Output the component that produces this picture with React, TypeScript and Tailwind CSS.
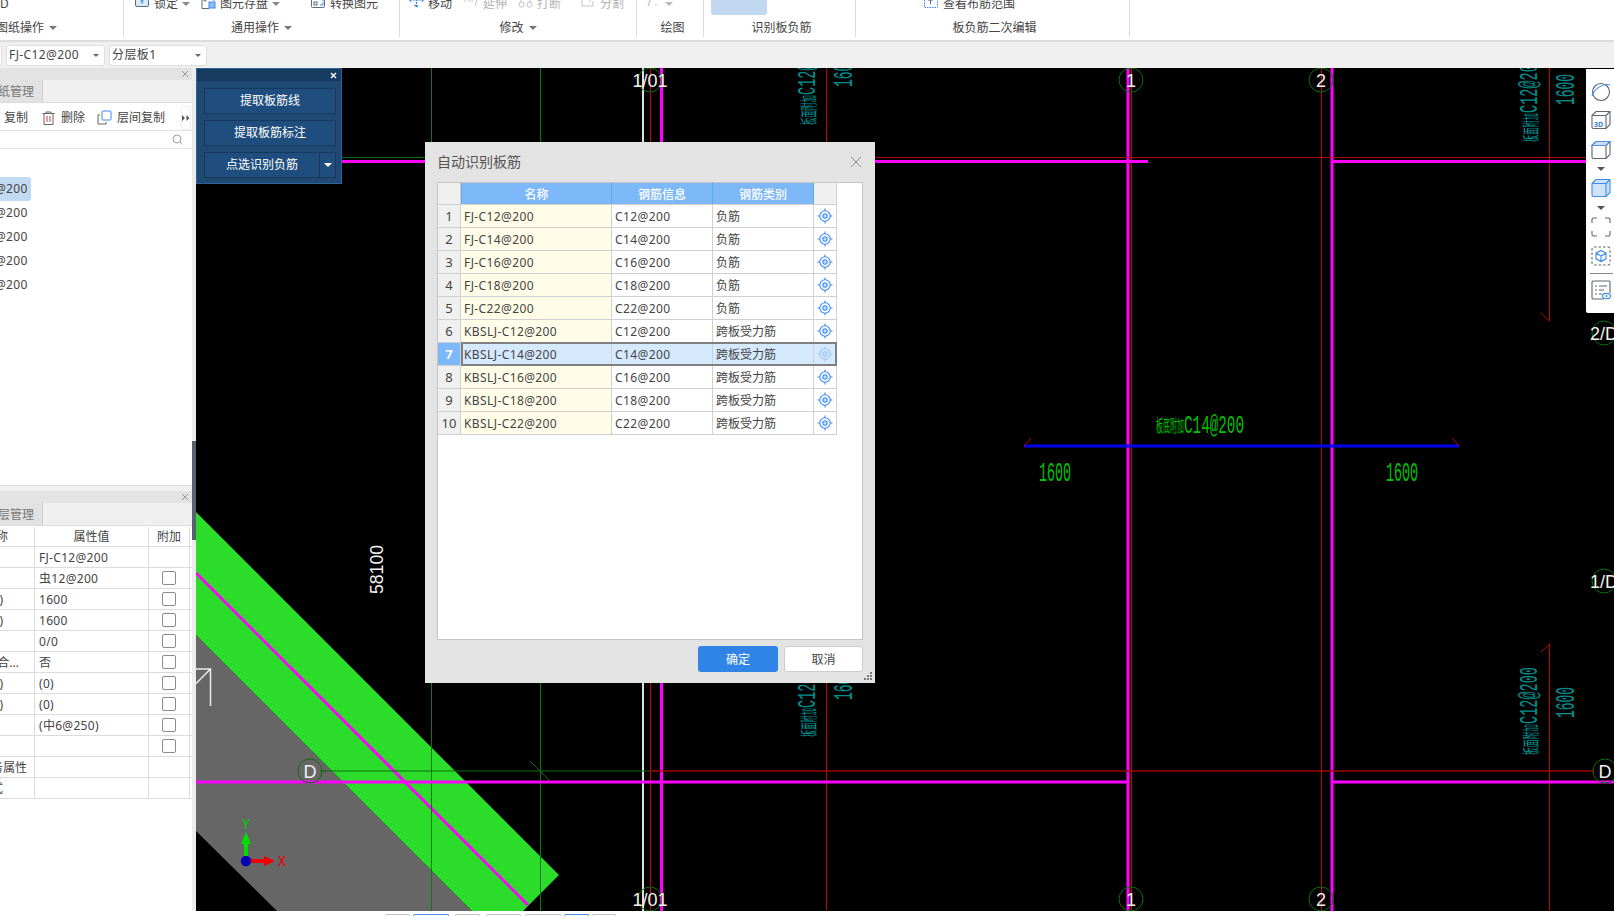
import React from "react";

const rows = [
  ["FJ-C12@200", "C12@200", "负筋"],
  ["FJ-C14@200", "C14@200", "负筋"],
  ["FJ-C16@200", "C16@200", "负筋"],
  ["FJ-C18@200", "C18@200", "负筋"],
  ["FJ-C22@200", "C22@200", "负筋"],
  ["KBSLJ-C12@200", "C12@200", "跨板受力筋"],
  ["KBSLJ-C14@200", "C14@200", "跨板受力筋"],
  ["KBSLJ-C16@200", "C16@200", "跨板受力筋"],
  ["KBSLJ-C18@200", "C18@200", "跨板受力筋"],
  ["KBSLJ-C22@200", "C22@200", "跨板受力筋"],
];

const props = [
  { left: "", pad: "", value: "FJ-C12@200", check: false },
  { left: "", pad: "", value: "虫12@200", check: true },
  { left: ")", pad: "pr-[31px]", value: "1600", check: true },
  { left: ")", pad: "pr-[31px]", value: "1600", check: true },
  { left: "", pad: "", value: "0/0", check: true },
  { left: "合...", pad: "pr-[15px]", value: "否", check: true },
  { left: ")", pad: "pr-[31px]", value: "(0)", check: true },
  { left: ")", pad: "pr-[31px]", value: "(0)", check: true },
  { left: "", pad: "", value: "(中6@250)", check: true },
  { left: "", pad: "", value: "", check: true },
  { left: "务属性", pad: "pr-[7px]", value: "", check: false },
  { left: "式", pad: "pr-[31px]", value: "", check: false },
];

const Caret = ({ className = "border-t-[#777]" }: { className?: string }) => (
  <span className={`inline-block h-0 w-0 border-x-[4px] border-t-[4px] border-x-transparent ${className}`} />
);

const Group = ({ width, label, caret, pad = "", top, children }: any) => (
  <div className={`flex h-[37px] shrink-0 flex-col border-r border-[#dcdcdc] ${width}`}>
    <div className={`flex h-[8px] items-center ${top}`}>{children}</div>
    <div className={`mt-[11px] flex h-[18px] items-center gap-[5px] ${pad}`}>
      <span>{label}</span>
      {caret && <Caret />}
    </div>
  </div>
);

const Item = ({ icon, text, caret, gray, className = "" }: any) => (
  <div className={`flex items-center gap-[4px] ${gray ? "text-[#b5b5b5]" : ""} ${className}`}>
    {icon}
    {text && <span>{text}</span>}
    {caret && <Caret className={gray ? "border-t-[#bbb]" : "border-t-[#888]"} />}
  </div>
);

const RIcon = ({ children }: { children: React.ReactNode }) => (
  <svg className="shrink-0" width="15" height="14" viewBox="0 0 15 14" fill="none" strokeWidth="1">
    {children}
  </svg>
);

const Target = ({ light }: { light?: boolean }) => (
  <svg width="16" height="16" viewBox="0 0 16 16" fill="none" stroke={light ? "#9fc5ee" : "#3d8bee"} strokeWidth="1.1">
    <circle cx="8" cy="8" r="5.2" />
    <circle cx="8" cy="8" r="2.2" fill={light ? "#9fc5ee" : "#3d8bee"} fillOpacity="0.3" />
    <path d="M8 0.5v2.4M8 13.1v2.4M0.5 8h2.4M13.1 8h2.4" />
  </svg>
);

const Cube = ({ top, fill, stroke = "#5d6675" }: { top?: string; fill?: string; stroke?: string }) => (
  <svg width="20" height="20" viewBox="0 0 20 20" fill="none" stroke={stroke} strokeWidth="1.1">
    <path d="M1 5.5 5 1.5h14v13l-4 4H2.5a1.5 1.5 0 0 1-1.5-1.5z" fill={fill || "none"} />
    <path d="M1 5.5h14v13M15 5.5l4-4" />
    {top && <path d="M1 5.5 5 1.5h14l-4 4z" fill={top} stroke="#4a90e8" />}
  </svg>
);

const cadFont = "'Liberation Mono', monospace";
const cjkFont = "'Noto Sans CJK SC', sans-serif";

const VText = ({ x, y, len, size, cjk, children, fill = "#009090" }: any) => (
  <text
    transform={`translate(${x} ${y}) rotate(-90)`}
    fontSize={size}
    fill={fill}
    textLength={len}
    lengthAdjust="spacingAndGlyphs"
    fontFamily={cjk ? cjkFont : cadFont}
  >
    {children}
  </text>
);

const HText = ({ x, y, len, size, cjk, children, fill = "#00c000" }: any) => (
  <text
    x={x}
    y={y}
    fontSize={size}
    fill={fill}
    textLength={len}
    lengthAdjust="spacingAndGlyphs"
    fontFamily={cjk ? cjkFont : cadFont}
  >
    {children}
  </text>
);

const Bubble = ({ x, y, text, r = 12 }: { x: number; y: number; text: string; r?: number }) => (
  <g>
    <circle cx={x} cy={y} r={r} fill="none" stroke="#0a6f0a" strokeWidth="1" />
    <text x={x} y={y + 6.5} fontSize="18" fill="#f0f0f0" textAnchor="middle" fontFamily="'Liberation Sans', sans-serif">
      {text}
    </text>
  </g>
);

const CadCanvas = () => (
  <svg className="block h-full w-full" viewBox="196 68 1418 843">
    <polygon points="196,635 472,911 277,911 196,831" fill="#666666" />
    <polygon points="196,512 559,875 523,911 472,911 196,635" fill="#2bdc2b" />
    <line x1="196" y1="573" x2="528" y2="905" stroke="#ff00ff" strokeWidth="3" />

    <path d="M431.5 68V911M540.5 68V911" stroke="#0a7a0a" strokeWidth="1" />
    <path d="M643 68V911" stroke="#e0e0e0" strokeWidth="2" />
    <path d="M650.5 68V911M826.5 68V911M1131.5 68V911M1321.5 68V911" stroke="#c80000" strokeWidth="1" />
    <path d="M1549.5 68V321L1541 313M1549.5 911V644L1541 652" stroke="#c80000" strokeWidth="1" fill="none" />
    <path d="M661.5 68V911M1128 68V911M1332 68V911" stroke="#ff00ff" strokeWidth="3" />

    <path d="M196 157.5H431" stroke="#0a6f0a" strokeWidth="1" />
    <path d="M431 157.5H1614" stroke="#b00000" strokeWidth="1" />
    <path d="M196 161.5H1148M1332 161.5H1614" stroke="#ff00ff" strokeWidth="3" />
    <path d="M320 771H650" stroke="#0a6f0a" strokeWidth="1" />
    <path d="M530 761 549 780" stroke="#0a6f0a" strokeWidth="1" />
    <path d="M650 771H1594" stroke="#a00000" strokeWidth="1.5" />
    <path d="M196 782H1128M1332 782H1614" stroke="#ff00ff" strokeWidth="3" />

    <path d="M1024 446H1459" stroke="#0000f0" strokeWidth="3" />
    <path d="M1024 446 1031 438M1459 446 1452 438" stroke="#c80000" strokeWidth="1" />
    <HText x={1039} y={481} len={32} size={27}>1600</HText>
    <HText x={1386} y={481} len={32} size={27}>1600</HText>
    <HText x={1184} y={433} len={60} size={26}>C14@200</HText>
    <HText x={1156} y={432} len={28} size={17} cjk>板底附加</HText>

    <VText x={1537} y={724} len={57} size={26}>C12@200</VText>
    <VText x={1537} y={755} len={31} size={17} cjk>板面附加</VText>
    <VText x={1574} y={718} len={31} size={27}>1600</VText>
    <VText x={1537} y={113} len={57} size={26}>C12@200</VText>
    <VText x={1537} y={142} len={29} size={17} cjk>板面附加</VText>
    <VText x={1574} y={105} len={31} size={27}>1600</VText>
    <VText x={815} y={95} len={57} size={26}>C12@200</VText>
    <VText x={815} y={125} len={30} size={17} cjk>板面附加</VText>
    <VText x={852} y={87} len={31} size={27}>1600</VText>
    <VText x={815} y={708} len={57} size={26}>C12@200</VText>
    <VText x={815} y={737} len={29} size={17} cjk>板面附加</VText>
    <VText x={852} y={700} len={31} size={27}>1600</VText>
    <text
      transform="translate(383 594) rotate(-90)"
      fontSize="19"
      fill="#f4f4f4"
      textLength={49}
      lengthAdjust="spacingAndGlyphs"
      fontFamily="'Liberation Sans', sans-serif"
    >
      58100
    </text>

    <path d="M196 669H210.5V706M210.5 669 196 683.5" stroke="#ececec" strokeWidth="1.5" fill="none" />

    <Bubble x={650} y={80} text="1/01" />
    <Bubble x={1131} y={80} text="1" />
    <Bubble x={1321} y={80} text="2" />
    <Bubble x={650} y={899} text="1/01" />
    <Bubble x={1131} y={899} text="1" />
    <Bubble x={1321} y={899} text="2" />
    <Bubble x={1604} y={333} text="2/D" />
    <Bubble x={1604} y={581} text="1/D" />
    <Bubble x={1605} y={771} text="D" />
    <Bubble x={310} y={771} text="D" />

    <rect x="244" y="842" width="4" height="18" fill="#00e000" />
    <polygon points="246,832 241,844 251,844" fill="#00e000" />
    <rect x="248" y="859" width="17" height="4" fill="#f00000" />
    <polygon points="275,861 264,856 264,866" fill="#f00000" />
    <circle cx="246" cy="861" r="5.2" fill="#0000b8" />
    <text x="246" y="829" fontSize="14" fill="#00d000" textAnchor="middle" fontFamily="'Liberation Mono', monospace">Y</text>
    <text x="282" y="866" fontSize="14" fill="#f00000" textAnchor="middle" fontFamily="'Liberation Mono', monospace">X</text>
  </svg>
);

const Ribbon = () => (
  <div className="flex h-[42px] shrink-0 border-b-2 border-[#dcdcdc] bg-white text-[12px] text-[#444]">
    <Group width="w-[124px]" label="图纸操作" caret pad="-ml-[4px]" top="">
      <span>D</span>
    </Group>
    <Group width="w-[276px]" label="通用操作" caret pad="justify-center" top="pl-[11px]">
      <Item
        icon={
          <RIcon>
            <rect x="0.5" y="-2.5" width="13" height="12" rx="1.5" stroke="#5a6a80" fill="#dbe9f9" />
            <path d="M7 7V3M5.5 4.5 7 3l1.5 1.5" stroke="#2f84e5" />
          </RIcon>
        }
        text="锁定"
        caret
      />
      <Item
        className="ml-[11px]"
        icon={
          <RIcon>
            <path d="M8 11.5H1V-2h12v6" stroke="#5a6a80" />
            <circle cx="4" cy="3" r="1.2" stroke="#5a6a80" />
            <rect x="8" y="5" width="6" height="6" fill="#8fbdf0" stroke="#3d8bee" />
          </RIcon>
        }
        text="图元存盘"
        caret
      />
      <Item
        className="ml-[31px]"
        icon={
          <RIcon>
            <rect x="0.5" y="-2.5" width="13" height="13" rx="1" stroke="#5a6a80" />
            <rect x="3" y="5" width="3" height="3" stroke="#5a6a80" />
            <path d="M9 1h3v3M9 8h3V5" stroke="#3d8bee" />
          </RIcon>
        }
        text="转换图元"
      />
    </Group>
    <Group width="w-[237px]" label="修改" caret pad="justify-center" top="pl-[9px]">
      <Item
        icon={
          <RIcon>
            <path d="M7.5 -1v11M0.5 3h14M5.5 8l2 2 2-2M2.5 1l-2 2 2 2M12.5 1l2 2-2 2" stroke="#2f84e5" strokeWidth="1.2" strokeDasharray="2 1" />
          </RIcon>
        }
        text="移动"
      />
      <Item
        gray
        className="ml-[12px]"
        icon={
          <RIcon>
            <path d="M0 4h2M4 4h2M7 4h2M14 0 11 9" stroke="#c4c4c4" />
          </RIcon>
        }
        text="延伸"
      />
      <Item
        gray
        className="ml-[11px]"
        icon={
          <RIcon>
            <rect x="1" y="5" width="5" height="5" rx="2" stroke="#c4c4c4" />
            <rect x="9" y="5" width="5" height="5" rx="2" stroke="#c4c4c4" />
            <path d="M3 5V1M12 5V1" stroke="#c4c4c4" />
          </RIcon>
        }
        text="打断"
      />
      <Item
        gray
        className="ml-[20px]"
        icon={
          <RIcon>
            <path d="M8 0H1v9h11V4M14 -1 8 5" stroke="#c4c4c4" />
          </RIcon>
        }
        text="分割"
      />
    </Group>
    <Group width="w-[67px]" label="绘图" pad="justify-center pl-[5px]" top="pl-[9px]">
      <Item
        gray
        icon={
          <RIcon>
            <path d="M5 1 2 9M9 8h2" stroke="#c0c0c0" strokeWidth="1.2" />
          </RIcon>
        }
        text=""
        caret
      />
    </Group>
    <Group width="w-[152px]" label="识别板负筋" pad="justify-center pl-[4px]" top="pl-[7px]">
      <div className="h-[22px] w-[56px] shrink-0 rounded-[3px] bg-[#c2d8f0]" />
    </Group>
    <Group width="w-[274px]" label="板负筋二次编辑" pad="justify-center pl-[4px]" top="pl-[68px]">
      <Item
        icon={
          <RIcon>
            <rect x="0.5" y="-2.5" width="13" height="13" stroke="#3d8bee" strokeDasharray="1.5 1" />
            <path d="M4 3h5M6.5 1v6" stroke="#5a6a80" />
          </RIcon>
        }
        text="查看布筋范围"
      />
    </Group>
  </div>
);

const Combo = ({ text, width }: { text: string; width: string }) => (
  <div className={`flex h-[21px] items-center justify-between rounded-[3px] border border-[#dedede] bg-white pl-[2px] pr-[5px] ${width}`}>
    <span className="tracking-[0.4px]">{text}</span>
    <span className="h-0 w-0 border-x-[3px] border-t-[3px] border-x-transparent border-t-[#666]" />
  </div>
);

const Toolbar = () => (
  <div className="flex h-[26px] shrink-0 items-center gap-[4px] bg-[#f0f0f0] text-[12px] text-[#444]">
    <div className="-ml-[6px] h-[21px] w-[8px] rounded-[3px] border border-[#dedede] bg-white" />
    <Combo text="FJ-C12@200" width="w-[99px]" />
    <Combo text="分层板1" width="w-[98px]" />
  </div>
);

const PanelHead = () => (
  <div className="flex h-[12px] shrink-0 items-center justify-end bg-[#e3e3e3] pr-[3px] text-[#999]">
    <svg width="8" height="8" viewBox="0 0 8 8" stroke="currentColor" strokeWidth="1">
      <path d="M1 1l6 6M7 1 1 7" />
    </svg>
  </div>
);

const PanelTab = ({ text }: { text: string }) => (
  <div className="flex h-[23px] shrink-0 items-end border-b border-[#dcdcdc] bg-[#f0f0f0]">
    <div className="flex h-[22px] w-[43px] items-center justify-end overflow-hidden whitespace-nowrap border-r border-[#cfcfcf] bg-[#e2e2e2] pr-[8px] pt-[1px] text-[#777]">
      {text}
    </div>
  </div>
);

const LeftColumn = () => (
  <div className="flex w-[196px] shrink-0 text-[12px] text-[#444]">
    <div className="flex w-[192px] shrink-0 flex-col bg-[#f0f0f0]">
      <div className="flex h-[418px] shrink-0 flex-col border-b border-[#dcdcdc] bg-white">
        <PanelHead />
        <PanelTab text="纸管理" />
        <div className="flex h-[28px] shrink-0 items-center border-b border-[#e2e2e2] pl-[4px] pt-[2px]">
          <span>复制</span>
          <svg className="ml-[14px]" width="13" height="14" viewBox="0 0 13 14" fill="none" stroke="#666" strokeWidth="1">
            <path d="M0.5 2.5h12M4 2.5V1h5v1.5M2 2.5v11h9v-11" />
            <path d="M5 5v6M8 5v6" stroke="#e03a3a" />
          </svg>
          <span className="ml-[6px]">删除</span>
          <svg className="ml-[12px]" width="15" height="15" viewBox="0 0 15 15" fill="none" stroke="#666" strokeWidth="1">
            <path d="M3 5H1v9h8v-2" />
            <rect x="5" y="1" width="9" height="9" rx="1" stroke="#3d8bee" fill="#fff" />
          </svg>
          <span className="ml-[5px]">层间复制</span>
          <div className="ml-[16px] flex h-[24px] w-[10px] items-center justify-center rounded-[2px] border border-[#eee]">
            <svg width="8" height="6" viewBox="0 0 8 6" fill="#555">
              <path d="M0 0l3 3-3 3zM4.5 0l3 3-3 3z" />
            </svg>
          </div>
        </div>
        <div className="flex h-[18px] shrink-0 items-center justify-end border-b border-[#e2e2e2] pr-[9px] text-[#a0a0a0]">
          <svg width="11" height="11" viewBox="0 0 11 11" fill="none" stroke="currentColor" strokeWidth="1">
            <circle cx="5" cy="5" r="4" />
            <path d="M8 8l2.5 2.5" />
          </svg>
        </div>
        <div className="flex flex-col pt-[28px] text-[12px]">
          {[0, 1, 2, 3, 4].map((i) => (
            <div
              key={i}
              className={`-ml-[5px] flex h-[24px] w-[36px] items-center tracking-[0.3px] ${i === 0 ? "rounded-[3px] bg-[#c2d9f2]" : ""}`}
            >
              @200
            </div>
          ))}
        </div>
      </div>
      <div className="mt-[5px] flex flex-1 flex-col bg-white">
        <PanelHead />
        <PanelTab text="层管理" />
        <div className="grid h-[21px] shrink-0 grid-cols-[35px_114px_41px] border-b border-[#dcdcdc] pt-[1px]">
          <div className="flex items-center justify-end overflow-hidden border-r border-[#dcdcdc] pr-[26px]">称</div>
          <div className="flex items-center justify-center border-r border-[#dcdcdc]">属性值</div>
          <div className="flex items-center justify-center border-r border-[#dcdcdc]">附加</div>
        </div>
        {props.map((p, i) => (
          <div key={i} className="grid h-[21px] shrink-0 grid-cols-[35px_114px_41px] border-b border-[#dcdcdc]">
            <div className={`flex items-center justify-end overflow-hidden whitespace-nowrap border-r border-[#dcdcdc] pt-[1px] ${p.pad}`}>{p.left}</div>
            <div className="flex items-center border-r border-[#dcdcdc] pl-[4px] pt-[1px] tracking-[0.3px]">{p.value}</div>
            <div className="flex items-center justify-center border-r border-[#dcdcdc]">
              {p.check && <div className="h-[14px] w-[14px] rounded-[2px] border border-[#8c8c8c] bg-white" />}
            </div>
          </div>
        ))}
      </div>
    </div>
    <div className="flex w-[4px] shrink-0 flex-col bg-[#ececec] pt-[373px]">
      <div className="h-[99px] bg-[#566270]" />
    </div>
  </div>
);

const FloatBtn = ({ text, className = "" }: { text: string; className?: string }) => (
  <div className={`flex h-[26px] items-center justify-center border border-[#17395f] bg-[#1f4e7e] ${className}`}>{text}</div>
);

const FloatPanel = () => (
  <div className="absolute left-0 top-0 w-[146px] border-[1.5px] border-[#2a6299] bg-[#1f4872] text-[12px] text-white">
    <div className="flex h-[12px] items-center justify-end bg-[#173a60] pr-[4px]">
      <svg width="7" height="7" viewBox="0 0 7 7" stroke="#fff" strokeWidth="1.4">
        <path d="M1 1l5 5M6 1 1 6" />
      </svg>
    </div>
    <div className="flex flex-col gap-[6px] pb-[5px] pl-[7px] pr-[5px] pt-[7px]">
      <FloatBtn text="提取板筋线" />
      <FloatBtn text="提取板筋标注" />
      <div className="flex">
        <FloatBtn text="点选识别负筋" className="flex-1" />
        <div className="flex h-[26px] w-[16px] items-center justify-center border-y border-r border-[#17395f] bg-[#1f4e7e]">
          <Caret className="border-t-white" />
        </div>
      </div>
    </div>
  </div>
);

const Dialog = () => (
  <div className="absolute left-[229px] top-[74px] flex h-[541px] w-[450px] flex-col bg-[#e3e3e3] px-[12px] text-[12px] text-[#444]">
    <div className="flex h-[40px] shrink-0 items-center justify-between pb-[1px]">
      <span className="text-[14px] text-[#555]">自动识别板筋</span>
      <svg className="mr-[1px]" width="12" height="12" viewBox="0 0 12 12" stroke="#8a8a8a" strokeWidth="1">
        <path d="M1 1l10 10M11 1 1 11" />
      </svg>
    </div>
    <div className="h-[458px] shrink-0 border border-[#c4c4c4] bg-white">
      <div className="grid h-[22px] w-[399px] grid-cols-[23px_151px_101px_101px_23px] border-b border-[#d0d0d0] font-medium text-white">
        <div className="border-r border-[#d0d0d0] bg-[#f0f0f0]" />
        <div className="flex items-center justify-center border-x border-[#5ea8f0] bg-[#7db8f8] pt-[2px]">名称</div>
        <div className="flex items-center justify-center border-r border-[#5ea8f0] bg-[#7db8f8] pt-[2px]">钢筋信息</div>
        <div className="flex items-center justify-center border-r border-[#5ea8f0] bg-[#7db8f8] pt-[2px]">钢筋类别</div>
        <div className="border-r border-[#d0d0d0] bg-[#f0f0f0]" />
      </div>
      {rows.map((r, i) => {
        const sel = i === 6;
        return (
          <div key={i} className="relative grid h-[23px] w-[399px] grid-cols-[23px_151px_101px_101px_23px] border-b border-[#d0d0d0]">
            <div className={`flex items-center justify-center border-r border-[#d0d0d0] pt-[2px] text-[13px] ${sel ? "bg-[#7db8f8] font-bold text-white" : "bg-[#f0f0f0]"}`}>
              {i + 1}
            </div>
            <div className={`flex items-center border-r border-[#d0d0d0] pl-[3px] pt-[2px] tracking-[0.4px] ${sel ? "bg-[#d5e9ff]" : "bg-[#fffde8]"}`}>{r[0]}</div>
            <div className={`flex items-center border-r border-[#d0d0d0] pl-[3px] pt-[2px] tracking-[0.4px] ${sel ? "bg-[#d5e9ff]" : ""}`}>{r[1]}</div>
            <div className={`flex items-center border-r border-[#d0d0d0] pl-[3px] pt-[2px] ${sel ? "bg-[#d5e9ff]" : ""}`}>{r[2]}</div>
            <div className={`flex items-center justify-center border-r border-[#d0d0d0] ${sel ? "bg-[#d5e9ff]" : ""}`}>
              <Target light={sel} />
            </div>
            {sel && <div className="absolute -bottom-[1px] left-[23px] right-0 top-[-1px] border-2 border-[#808080]" />}
          </div>
        );
      })}
    </div>
    <div className="mt-[6px] flex justify-end gap-[6px]">
      <div className="flex h-[26px] w-[80px] items-center justify-center rounded-[3px] bg-[#2f84e5] pt-[1px] text-white">确定</div>
      <div className="flex h-[26px] w-[79px] items-center justify-center rounded-[3px] border border-[#cccccc] bg-white pt-[1px]">取消</div>
    </div>
    <div className="absolute bottom-[3px] right-[3px] grid grid-cols-3 gap-[1px]">
      {[0, 0, 1, 0, 1, 1, 1, 1, 1].map((on, i) => (
        <span key={i} className={`h-[2px] w-[2px] ${on ? "bg-[#777]" : ""}`} />
      ))}
    </div>
  </div>
);

const SideBar = () => (
  <div className="absolute right-0 top-[1px] flex w-[28px] flex-col items-center rounded-bl-[2px] bg-white pb-[13px] pl-[2px] pt-[13px]">
    <svg width="20" height="20" viewBox="0 0 20 20" fill="none" strokeWidth="1.1">
      <circle cx="10" cy="10" r="8.5" stroke="#5d6675" />
      <path d="M1 14C3 7 12 1 19 3" stroke="#3d8bee" />
    </svg>
    <div className="relative mt-[8px] h-[20px]">
      <Cube />
      <span className="absolute bottom-[1px] left-[3px] text-[7px] font-bold leading-[8px] text-[#2f84e5]">3D</span>
    </div>
    <div className="mt-[10px] h-[20px]"><Cube top="#c9def5" /></div>
    <div className="mt-[6px] flex h-[6px] items-center"><Caret className="border-t-[#555]" /></div>
    <div className="mt-[6px] h-[20px]"><Cube fill="#d0e2f8" stroke="#3d8bee" /></div>
    <div className="mt-[7px] flex h-[6px] items-center"><Caret className="border-t-[#555]" /></div>
    <svg className="mt-[6px]" width="20" height="20" viewBox="0 0 20 20" fill="none" stroke="#5d6675" strokeWidth="1.1">
      <path d="M1 6V2.5A1.5 1.5 0 0 1 2.5 1H6M14 1h3.5A1.5 1.5 0 0 1 19 2.5V6M19 14v3.5a1.5 1.5 0 0 1-1.5 1.5H14M6 19H2.5A1.5 1.5 0 0 1 1 17.5V14" />
    </svg>
    <svg className="mt-[9px]" width="20" height="20" viewBox="0 0 20 20" fill="none" strokeWidth="1.1">
      <rect x="1" y="1" width="18" height="18" rx="2" stroke="#5d6675" strokeDasharray="2.5 2" />
      <path d="M10 4.5 15 7.2v5.6L10 15.5 5 12.8V7.2zM5 7.2l5 2.8 5-2.8M10 10v5.5" stroke="#3d8bee" />
    </svg>
    <div className="mt-[7px] h-px w-[23px] bg-[#8a8a8a]" />
    <svg className="mt-[6px]" width="20" height="20" viewBox="0 0 20 20" fill="none" strokeWidth="1.1">
      <path d="M13 19H2a1 1 0 0 1-1-1V2a1 1 0 0 1 1-1h16a1 1 0 0 1 1 1v11" stroke="#5d6675" />
      <path d="M4 6h2M8 6h8M4 10h2M8 10h5M4 14h2M8 14h3" stroke="#5d6675" />
      <ellipse cx="15.5" cy="16" rx="4" ry="2.6" stroke="#3d8bee" />
      <circle cx="15.5" cy="16" r="1" fill="#3d8bee" stroke="none" />
    </svg>
  </div>
);

const Strip = () => (
  <div className="flex h-[5px] shrink-0 items-end bg-white pl-[385px]">
    {[
      ["w-[25px]", "border-[#c4c4c4]", "ml-0"],
      ["w-[36px]", "border-[#4a90e8]", "ml-[3px]"],
      ["w-[25px]", "border-[#c4c4c4]", "ml-[6px]"],
      ["w-[35px]", "border-[#c4c4c4]", "ml-[6px]"],
      ["w-[36px]", "border-[#c4c4c4]", "ml-[4px]"],
      ["w-[25px]", "border-[#4a90e8]", "ml-[3px]"],
      ["w-[24px]", "border-[#c4c4c4]", "ml-[3px]"],
    ].map((t, i) => (
      <div key={i} className={`h-[2px] rounded-t-[3px] border-x border-t ${t[0]} ${t[1]} ${t[2]}`} />
    ))}
  </div>
);

export default function App() {
  return (
    <div className="flex h-[916px] w-[1614px] flex-col overflow-hidden bg-white font-['Noto_Sans','Noto_Sans_CJK_SC',sans-serif]">
      <Ribbon />
      <Toolbar />
      <div className="flex h-[843px] shrink-0">
        <LeftColumn />
        <div className="relative flex-1 overflow-hidden bg-black">
          <CadCanvas />
          <FloatPanel />
          <Dialog />
          <SideBar />
        </div>
      </div>
      <Strip />
    </div>
  );
}
